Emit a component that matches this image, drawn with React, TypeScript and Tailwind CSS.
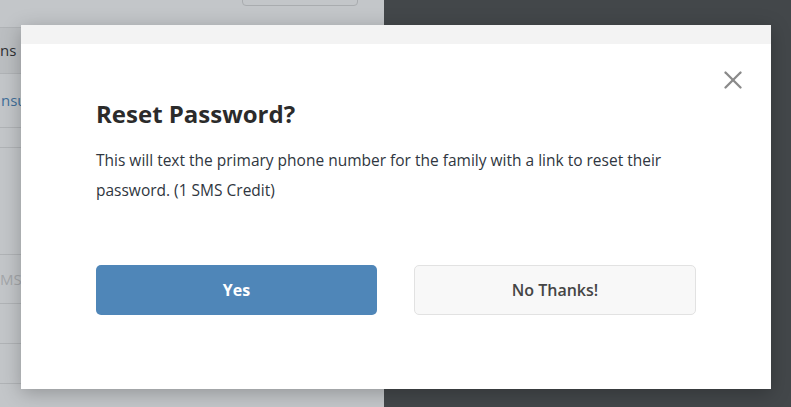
import { X } from "lucide-react";

export default function App() {
  return (
    <div
      className="relative w-[791px] h-[407px] overflow-hidden flex bg-[#43474a]"
      style={{ fontFamily: '"Open Sans", "Noto Sans", sans-serif' }}
    >
      {/* Dimmed page behind the modal */}
      <div className="w-[384px] h-full bg-[#c3c6c9] flex flex-col">
        <div className="h-[27px] flex">
          <div className="ml-[242px] w-[116px] h-[7px] -mt-[1px] border border-[#a9acaf] rounded-b-[4px]" />
        </div>
        <div className="h-[46px] bg-[#bbbec1] border-t border-[#b0b3b6] flex items-center text-[15px] text-[#2f3133]">
          <span>ns</span>
        </div>
        <div className="h-[54px] border-t border-[#b0b3b6] flex items-center text-[15px] text-[#3f6f99]">
          <span className="ml-[1px]">nsu</span>
        </div>
        <div className="h-[20px] border-t border-[#b0b3b6]" />
        <div className="h-[107px] border-t border-[#b0b3b6]" />
        <div className="h-[49px] border-t border-[#b0b3b6] flex items-center text-[15px] text-[#a3a6a9]">
          <span>MS</span>
        </div>
        <div className="h-[40px] border-t border-[#b0b3b6]" />
        <div className="h-[40px] border-t border-[#b0b3b6]" />
        <div className="flex-1 border-t border-[#b0b3b6]" />
      </div>
      <div className="flex-1" />

      {/* Modal */}
      <div className="absolute left-[21px] top-[25px] w-[750px] h-[364px] bg-white shadow-[0_4px_18px_rgba(0,0,0,0.25)] flex flex-col">
        <div className="h-[19px] bg-[#f3f3f3]" />
        <button className="absolute right-[23px] top-[40px] w-[30px] h-[30px] flex items-center justify-center text-[#8a8a8a]">
          <X className="w-[30px] h-[30px]" strokeWidth={1.9} />
        </button>
        <div className="px-[75px]">
          <h2 className="mt-[58px] text-[24px] leading-[24px] font-bold text-[#2b2b2b]">
            Reset Password?
          </h2>
          <p className="mt-[19px] text-[15.5px] leading-[30px] text-[#2f3640]">
            This will text the primary phone number for the family with a link to reset their
            password. (1 SMS Credit)
          </p>
          <div className="mt-[60px] flex gap-[37px]">
            <button className="w-[281px] h-[50px] rounded-[5px] bg-[#4f86b8] text-white text-[16px] font-bold">
              Yes
            </button>
            <button className="w-[282px] h-[50px] rounded-[5px] bg-[#f8f8f8] border border-[#e2e2e2] text-[#454545] text-[16px] font-semibold">
              No Thanks!
            </button>
          </div>
        </div>
      </div>
    </div>
  );
}
